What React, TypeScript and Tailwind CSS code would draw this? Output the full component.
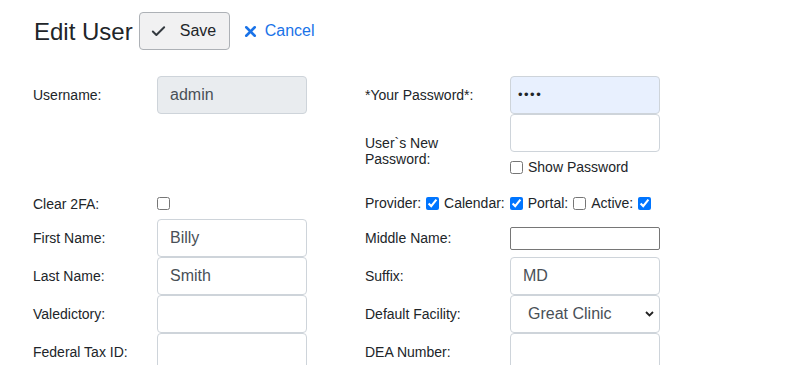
import React from "react";
import { Check, X } from "lucide-react";

const inputCls =
  "h-[38px] w-[150px] rounded-[4px] border border-[#ced4da] bg-white px-3 text-[16px] text-[#495057] outline-none";

function Label({ children }: { children: React.ReactNode }) {
  return <div className="text-[14px] leading-[16px] text-[#212529]">{children}</div>;
}

function Cb({ checked }: { checked?: boolean }) {
  return (
    <input
      type="checkbox"
      defaultChecked={checked}
      className="m-0 h-[13px] w-[13px] shrink-0"
    />
  );
}

export default function App() {
  return (
    <div
      className="min-h-[365px] w-[812px] overflow-hidden bg-white pl-[33px] pt-[12px] text-[#212529]"
      style={{ fontFamily: '"Liberation Sans", Arial, sans-serif' }}
    >
      {/* Header */}
      <div className="flex h-[38px] items-center">
        <h1 className="ml-[1px] mt-[1px] text-[24px] font-normal leading-[28px] text-[#212529]">Edit User</h1>
        <button className="ml-[6px] flex h-[38px] w-[91px] items-center rounded-[4px] border border-[#adb1b6] bg-[#f1f1f2] pl-[10px] text-[16px] text-[#212529]">
          <Check size={17} strokeWidth={2.8} className="text-[#343a40]" />
          <span className="ml-[13px]">Save</span>
        </button>
        <a className="ml-[12px] flex items-center text-[16px] text-[#1a73e8]" href="#">
          <X size={17} strokeWidth={3.6} />
          <span className="ml-[6px]">Cancel</span>
        </a>
      </div>

      {/* Form grid */}
      <div className="mt-[26px] grid grid-cols-[124px_150px_58px_145px_150px] grid-rows-[38px_74px_31px_38px_38px_38px_38px] items-center">
        {/* Row 1 */}
        <Label>Username:</Label>
        <input readOnly value="admin" className={inputCls + " !bg-[#e9ecef]"} />
        <div />
        <Label>*Your Password*:</Label>
        <div className="flex h-[38px] w-[150px] items-center rounded-[4px] border border-[#ced4da] bg-[#e8f0fe] pl-[7px] text-[13px] tracking-[1.5px] text-[#212529]">
          ••••
        </div>

        {/* Row 2 */}
        <div />
        <div />
        <div />
        <div className="pr-[4px]">
          <Label>User`s New Password:</Label>
        </div>
        <div className="self-start">
          <input readOnly value="" className={inputCls} />
          <div className="flex h-[30px] items-center">
            <Cb />
            <span className="ml-[5px] text-[14px] text-[#212529]">Show Password</span>
          </div>
        </div>

        {/* Row 3 */}
        <Label>Clear 2FA:</Label>
        <div className="flex items-center">
          <Cb />
        </div>
        <div />
        <div className="col-span-2 flex items-center text-[14px] text-[#212529]">
          <span>Provider:</span>
          <span className="ml-[5px] flex"><Cb checked /></span>
          <span className="ml-[5px]">Calendar:</span>
          <span className="ml-[5px] flex"><Cb checked /></span>
          <span className="ml-[5px]">Portal:</span>
          <span className="ml-[5px] flex"><Cb /></span>
          <span className="ml-[5px]">Active:</span>
          <span className="ml-[5px] flex"><Cb checked /></span>
        </div>

        {/* Row 4 */}
        <Label>First Name:</Label>
        <input readOnly value="Billy" className={inputCls} />
        <div />
        <Label>Middle Name:</Label>
        <input
          readOnly
          value=""
          className="h-[23px] w-[150px] rounded-[2px] border border-[#767676] bg-white px-[2px] text-[14px] outline-none"
        />

        {/* Row 5 */}
        <Label>Last Name:</Label>
        <input readOnly value="Smith" className={inputCls} />
        <div />
        <Label>Suffix:</Label>
        <input readOnly value="MD" className={inputCls} />

        {/* Row 6 */}
        <Label>Valedictory:</Label>
        <input readOnly value="" className={inputCls} />
        <div />
        <Label>Default Facility:</Label>
        <div className="flex h-[38px] w-[150px] items-center justify-between rounded-[4px] border border-[#ced4da] bg-white pl-[17px] pr-[5px] text-[16px] text-[#495057]">
          <span>Great Clinic</span>
          <svg width="9" height="6" viewBox="0 0 9 6" fill="none">
            <path d="M1 1 L4.5 4.5 L8 1" stroke="#222" strokeWidth="1.8" />
          </svg>
        </div>

        {/* Row 7 */}
        <Label>Federal Tax ID:</Label>
        <input readOnly value="" className={inputCls} />
        <div />
        <Label>DEA Number:</Label>
        <input readOnly value="" className={inputCls} />
      </div>
    </div>
  );
}
